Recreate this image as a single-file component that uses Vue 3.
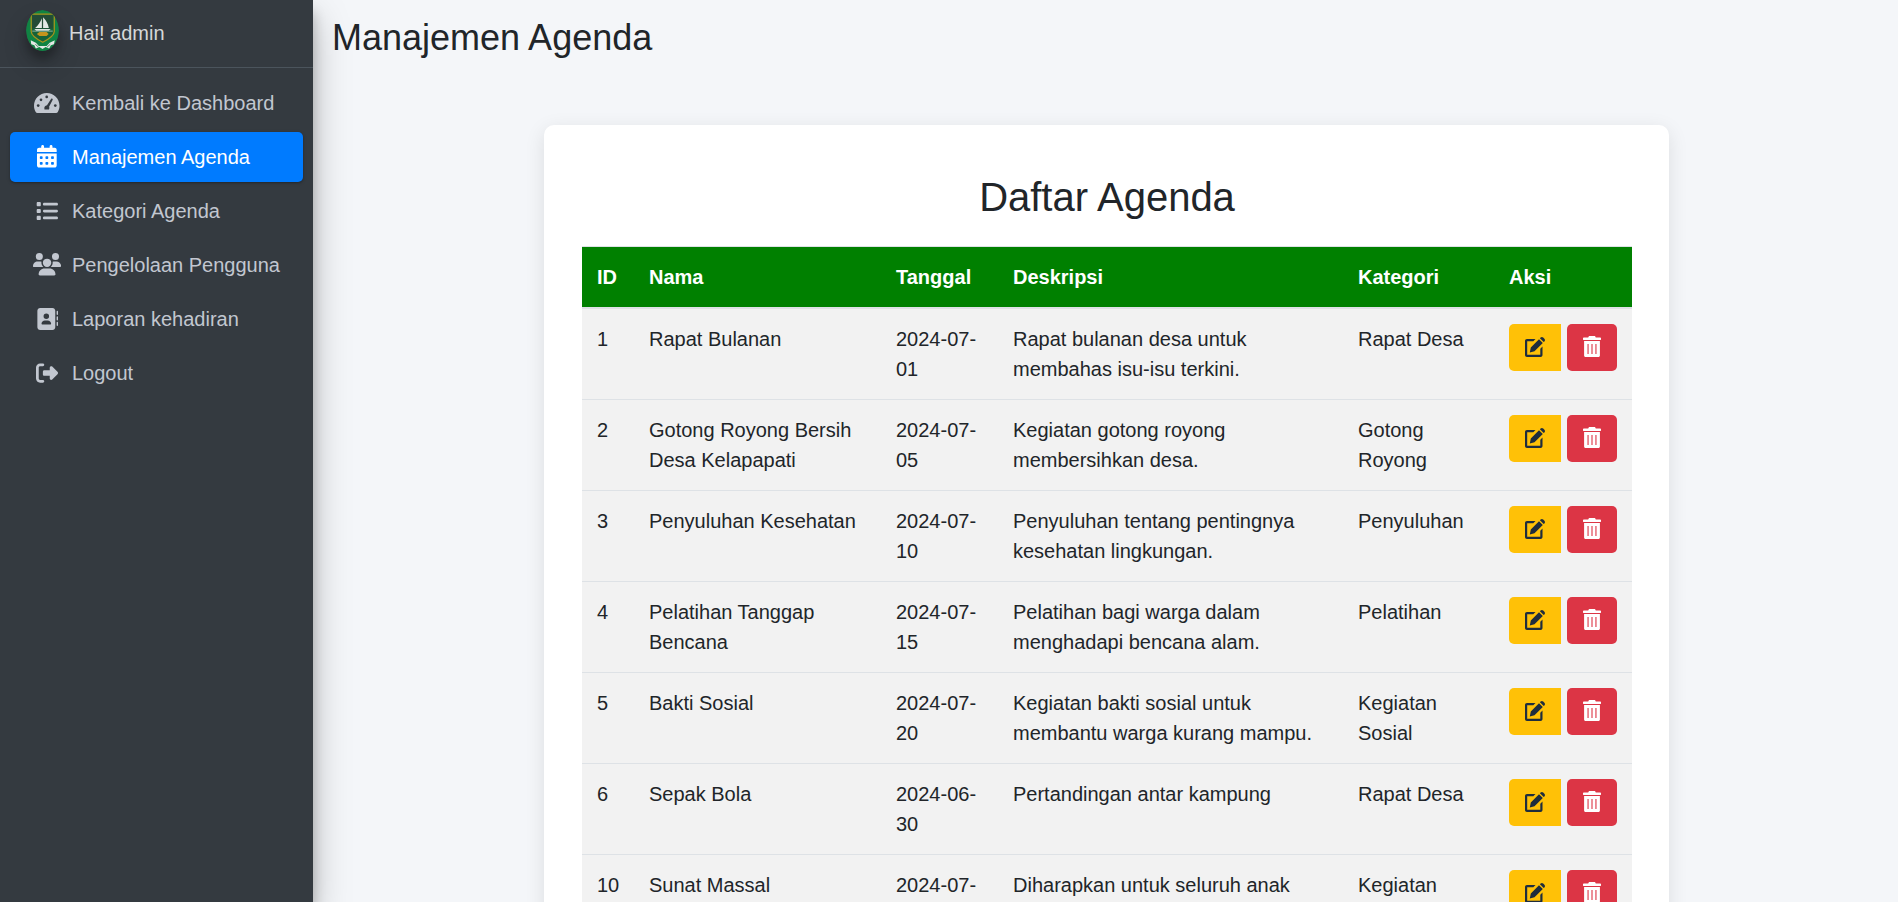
<script setup>
const nav = [
  { icon: 'gauge', label: 'Kembali ke Dashboard' },
  { icon: 'calendar', label: 'Manajemen Agenda', active: true },
  { icon: 'list', label: 'Kategori Agenda' },
  { icon: 'users', label: 'Pengelolaan Pengguna' },
  { icon: 'book', label: 'Laporan kehadiran' },
  { icon: 'logout', label: 'Logout' },
]
const icons = {
  calendar: { w: 448, d: 'M128 0c17.700 0 32 14.300 32 32V64H288V32c0-17.700 14.300-32 32-32s32 14.300 32 32V64h48c26.500 0 48 21.500 48 48v48H0V112C0 85.500 21.500 64 48 64H96V32c0-17.700 14.300-32 32-32zM0 192H448V464c0 26.500-21.500 48-48 48H48c-26.500 0-48-21.500-48-48V192zm64 80v32c0 8.800 7.200 16 16 16h32c8.800 0 16-7.200 16-16V272c0-8.800-7.200-16-16-16H80c-8.800 0-16 7.200-16 16zm128 0v32c0 8.800 7.200 16 16 16h32c8.800 0 16-7.200 16-16V272c0-8.800-7.200-16-16-16H208c-8.800 0-16 7.200-16 16zm144-16c-8.800 0-16 7.200-16 16v32c0 8.800 7.200 16 16 16h32c8.800 0 16-7.200 16-16V272c0-8.800-7.200-16-16-16H336zM64 400v32c0 8.800 7.200 16 16 16h32c8.800 0 16-7.200 16-16V400c0-8.800-7.200-16-16-16H80c-8.800 0-16 7.200-16 16zm144-16c-8.800 0-16 7.200-16 16v32c0 8.800 7.200 16 16 16h32c8.800 0 16-7.200 16-16V400c0-8.800-7.200-16-16-16H208zm112 16v32c0 8.800 7.200 16 16 16h32c8.800 0 16-7.200 16-16V400c0-8.800-7.200-16-16-16H336c-8.800 0-16 7.200-16 16z' },
  list: { w: 512, d: 'M40 48C26.700 48 16 58.700 16 72v48c0 13.300 10.700 24 24 24H88c13.300 0 24-10.700 24-24V72c0-13.300-10.700-24-24-24H40zM192 64c-17.700 0-32 14.300-32 32s14.300 32 32 32H480c17.700 0 32-14.300 32-32s-14.300-32-32-32H192zm0 160c-17.700 0-32 14.300-32 32s14.300 32 32 32H480c17.700 0 32-14.300 32-32s-14.300-32-32-32H192zm0 160c-17.700 0-32 14.300-32 32s14.300 32 32 32H480c17.700 0 32-14.300 32-32s-14.300-32-32-32H192zM16 232v48c0 13.300 10.700 24 24 24H88c13.300 0 24-10.700 24-24V232c0-13.300-10.700-24-24-24H40c-13.300 0-24 10.700-24 24zM40 368c-13.300 0-24 10.700-24 24v48c0 13.300 10.700 24 24 24H88c13.300 0 24-10.700 24-24V392c0-13.300-10.700-24-24-24H40z' },
  users: { w: 640, d: 'M144 0a80 80 0 1 1 0 160A80 80 0 1 1 144 0zM512 0a80 80 0 1 1 0 160A80 80 0 1 1 512 0zM0 298.700C0 239.800 47.800 192 106.700 192h42.700c15.900 0 31 3.500 44.600 9.700c-1.300 7.200-1.900 14.700-1.900 22.300c0 38.200 16.800 72.500 43.300 96c-.2 0-.4 0-.7 0H21.300C9.600 320 0 310.400 0 298.700zM405.300 320c-.2 0-.4 0-.7 0c26.600-23.500 43.300-57.800 43.300-96c0-7.600-.7-15-1.900-22.300c13.600-6.300 28.700-9.700 44.600-9.700h42.700C592.200 192 640 239.800 640 298.700c0 11.800-9.600 21.300-21.300 21.300H405.300zM224 224a96 96 0 1 1 192 0 96 96 0 1 1-192 0zM128 485.300C128 411.700 187.700 352 261.300 352H378.700C452.300 352 512 411.700 512 485.300c0 14.700-11.900 26.700-26.700 26.700H154.700c-14.700 0-26.700-11.900-26.700-26.700z' },
  book: { w: 512, d: 'M96 0C60.700 0 32 28.700 32 64V448c0 35.300 28.700 64 64 64H384c35.300 0 64-28.700 64-64V64c0-35.300-28.700-64-64-64H96zM208 288h64c44.200 0 80 35.800 80 80c0 8.800-7.200 16-16 16H144c-8.800 0-16-7.200-16-16c0-44.200 35.800-80 80-80zm-32-96a64 64 0 1 1 128 0 64 64 0 1 1-128 0zM512 80c0-8.800-7.200-16-16-16s-16 7.200-16 16v64c0 8.800 7.200 16 16 16s16-7.200 16-16V80zM496 192c-8.800 0-16 7.200-16 16v64c0 8.800 7.200 16 16 16s16-7.200 16-16V208c0-8.800-7.200-16-16-16zm16 144c0-8.800-7.200-16-16-16s-16 7.200-16 16v64c0 8.800 7.200 16 16 16s16-7.200 16-16V336z' },
  logout: { w: 512, d: 'M377.900 105.900L500.700 228.700c7.200 7.200 11.300 17.100 11.300 27.300s-4.100 20.100-11.300 27.300L377.900 406.100c-6.400 6.400-15 9.900-24 9.900c-18.700 0-33.900-15.200-33.900-33.900l0-62.100-128 0c-17.700 0-32-14.300-32-32l0-64c0-17.700 14.300-32 32-32l128 0 0-62.100c0-18.700 15.200-33.900 33.900-33.900c9 0 17.600 3.600 24 9.900zM160 96L96 96c-17.700 0-32 14.300-32 32l0 256c0 17.700 14.300 32 32 32l64 0c17.700 0 32 14.300 32 32s-14.300 32-32 32l-64 0c-53 0-96-43-96-96L0 128C0 75 43 32 96 32l64 0c17.700 0 32 14.300 32 32s-14.300 32-32 32z' },
}
const columns = ['ID', 'Nama', 'Tanggal', 'Deskripsi', 'Kategori', 'Aksi']
const rows = [
  [1, 'Rapat Bulanan', '2024-07-01', 'Rapat bulanan desa untuk membahas isu-isu terkini.', 'Rapat Desa'],
  [2, 'Gotong Royong Bersih Desa Kelapapati', '2024-07-05', 'Kegiatan gotong royong membersihkan desa.', 'Gotong Royong'],
  [3, 'Penyuluhan Kesehatan', '2024-07-10', 'Penyuluhan tentang pentingnya kesehatan lingkungan.', 'Penyuluhan'],
  [4, 'Pelatihan Tanggap Bencana', '2024-07-15', 'Pelatihan bagi warga dalam menghadapi bencana alam.', 'Pelatihan'],
  [5, 'Bakti Sosial', '2024-07-20', 'Kegiatan bakti sosial untuk membantu warga kurang mampu.', 'Kegiatan Sosial'],
  [6, 'Sepak Bola', '2024-06-30', 'Pertandingan antar kampung', 'Rapat Desa'],
  [10, 'Sunat Massal', '2024-07-', 'Diharapkan untuk seluruh anak', 'Kegiatan'],
]
</script>

<template>
  <div class="layout">
    <aside class="sidebar">
      <div class="brand">
        <svg class="crest" viewBox="0 0 32 40">
          <ellipse cx="16" cy="20" rx="16" ry="20" fill="#108343" />
          <path d="M5 4h22.500v17c0 4-4.500 7-11.300 10.500C9.500 28 5 25 5 21z" fill="#176238" stroke="#a9931d" stroke-width="1.200" />
          <path d="M6 5h20v13H6z" fill="#244b36" />
          <path d="M15.400 8v9.600H8.800c3-2.600 5.200-6 6.600-9.600zM16.600 7c3 3 4.800 6.600 5.600 10.600h-5.600z" fill="#e4e9e6" />
          <path d="M8 18.500h16l-2 1.800H10z" fill="#dfe5e1" />
          <path d="M6 20.600h20" stroke="#a8c2b3" stroke-width=".8" />
          <path d="M10.500 23.300l2.500-1.800h7l2 1.800-2 2h-7z" fill="#c4941c" />
          <path d="M4.500 29.500l5 2.500 3 3.200h7.500l3-3.200 5-2.500-.8 4-3 .8-1.700 3.200-3.500-1.500-3 2-3-2-3.500 1.500-1.500-3.200-3-.8z" fill="#e3e8e5" />
          <path d="M9 33.500l3 2.600M23.500 33.500l-3 2.600" stroke="#3c7754" stroke-width=".8" />
        </svg>
        <span>Hai! admin</span>
      </div>
      <nav class="menu">
        <a v-for="item in nav" :key="item.label" class="item" :class="{ active: item.active }">
          <span class="slot">
            <svg v-if="item.icon === 'gauge'" class="icon gauge" viewBox="0 0 25.5 20">
              <path d="M12.750 0C5.700 0 0 5.700 0 12.700c0 2.300.6 4.400 1.700 6.200.4.700.9 1.100 1.700 1.100h18.700c.8 0 1.300-.4 1.700-1.100 1.100-1.800 1.700-3.900 1.700-6.200C25.500 5.700 19.800 0 12.750 0z" />
              <g class="cut">
                <circle cx="4.200" cy="12.600" r="1.350" />
                <circle cx="7" cy="6.800" r="1.350" />
                <circle cx="12.700" cy="3.900" r="1.350" />
                <circle cx="21.300" cy="12.600" r="1.350" />
                <path d="M17.200 5.800c.5-.7 1.900.1 1.500 1l-3.600 7c.4.800.4 1.700-.1 2.600h-4.500c-.7-2.100.6-3.900 2.500-4.100z" />
              </g>
            </svg>
            <svg v-else class="icon" :class="item.icon" :viewBox="`0 0 ${icons[item.icon].w} 512`"><path :d="icons[item.icon].d" /></svg>
          </span>
          <span>{{ item.label }}</span>
        </a>
      </nav>
    </aside>
    <main class="content">
      <h1>Manajemen Agenda</h1>
      <section class="card">
        <h2>Daftar Agenda</h2>
        <table>
          <colgroup><col v-for="c in columns" :key="c" :class="c.toLowerCase()" /></colgroup>
          <thead>
            <tr><th v-for="c in columns" :key="c">{{ c }}</th></tr>
          </thead>
          <tbody>
            <tr v-for="row in rows" :key="row[0]">
              <td v-for="(cell, i) in row" :key="i">{{ cell }}</td>
              <td>
                <div class="actions">
                  <button class="btn edit">
                    <svg viewBox="0 0 20 20">
                      <path d="M10.500 2H2C.8 2 0 2.800 0 4v14c0 1.200.8 2 2 2h13.500c1.200 0 2-.8 2-2V9.500l-2.200 2.200v6H2.200V4.300h6.100z" />
                      <path d="M14 2.200l3.800 3.800-8.300 8.300-4.700 1.200 1-4.900zM14.900 1.300l.7-.7c.8-.8 1.800-.8 2.600 0l1.200 1.200c.8.8.8 1.800 0 2.600l-.7.700z" />
                    </svg>
                  </button>
                  <button class="btn trash">
                    <svg viewBox="0 0 18 21">
                      <path d="M6 0h6l.8 1.400h4.400c.5 0 .8.300.8.800v1.300c0 .3-.2.500-.5.500H.5c-.3 0-.5-.2-.5-.5V2.200c0-.5.300-.8.800-.8h4.400z" />
                      <path fill-rule="evenodd" d="M1.100 5.100h15.800v14.400c0 .9-.6 1.500-1.500 1.500H2.600c-.9 0-1.500-.6-1.500-1.500zM4.500 8v10h1.100V8zM8.450 8v10h1.100V8zM12.400 8v10h1.100V8z" />
                    </svg>
                  </button>
                </div>
              </td>
            </tr>
          </tbody>
        </table>
      </section>
    </main>
  </div>
</template>

<style>
body { margin: 0; overflow: hidden; }
</style>

<style scoped>
* { box-sizing: border-box; }
.layout {
  display: flex;
  height: 902px;
  overflow: hidden;
  background: #f4f6f9;
  color: #212529;
  font: 20px/30px "Liberation Sans", Arial, sans-serif;
}
.sidebar {
  flex: 0 0 313px;
  z-index: 1;
  background: #343a40;
  box-shadow: 0 17px 35px rgba(0, 0, 0, .25), 0 12px 12px rgba(0, 0, 0, .22);
}
.brand {
  display: flex;
  height: 68px;
  padding: 10px 0 0 26px;
  gap: 10px;
  border-bottom: 1px solid #4b545c;
  color: #d6d8d9;
  line-height: 46px;
}
.crest {
  width: 33px;
  height: 41px;
  border-radius: 50%;
  box-shadow: 0 12px 24px rgba(0, 0, 0, .19), 0 8px 8px rgba(0, 0, 0, .23);
}
.menu {
  display: flex;
  flex-direction: column;
  gap: 4px;
  padding: 10px;
}
.item {
  display: flex;
  align-items: center;
  height: 50px;
  padding-left: 20px;
  border-radius: 5px;
  color: #c2c7d0;
}
.item.active {
  background: #007bff;
  color: #fff;
  box-shadow: 0 1px 4px rgba(0, 0, 0, .12), 0 1px 2px rgba(0, 0, 0, .24);
}
.slot {
  display: flex;
  justify-content: center;
  width: 34px;
  margin-right: 8px;
}
.icon { height: 22px; margin-bottom: 1px; fill: currentColor; }
.icon.gauge { height: 20px; }
.icon.gauge .cut { fill: #343a40; }
.icon.calendar, .icon.users { height: 22.5px; }
.content { flex: 1; }
h1 {
  margin: 16px 0 65px 19px;
  font-size: 36px;
  font-weight: 400;
  line-height: 44px;
}
.card {
  width: 1125px;
  margin-left: 231px;
  padding: 48px 37px 0 38px;
  border-radius: 10px;
  background: #fff;
  box-shadow: 0 5px 20px rgba(0, 0, 0, .1);
}
h2 {
  margin: 0 0 25px;
  font-size: 40px;
  font-weight: 400;
  line-height: 48px;
  text-align: center;
}
table {
  width: 1050px;
  table-layout: fixed;
  border-spacing: 0;
  background: #f2f2f2;
}
col.id { width: 52px; }
col.nama { width: 247px; }
col.tanggal { width: 117px; }
col.deskripsi { width: 345px; }
col.kategori { width: 151px; }
col.aksi { width: 138px; }
th {
  padding: 15px;
  border-top: 1px solid #dee2e6;
  border-bottom: 2px solid #dee2e6;
  background: green;
  background-clip: padding-box;
  color: #fff;
  text-align: left;
}
td {
  height: 91px;
  padding: 15px;
  border-top: 1px solid #dee2e6;
  vertical-align: top;
}
tbody tr:first-child td { height: 90px; border-top: 0; }
.actions { display: flex; gap: 6px; }
.btn {
  display: flex;
  align-items: center;
  justify-content: center;
  height: 47px;
  padding: 0;
  border: 0;
}
.btn svg { height: 20px; fill: currentColor; margin-bottom: 2px; }
.btn.edit { width: 52px; border-radius: 5px 0 0 5px; background: #ffc107; color: #1f2d3d; }
.btn.trash { width: 50px; border-radius: 5px; background: #dc3545; color: #fff; }
.btn.trash svg { height: 21px; }
</style>
